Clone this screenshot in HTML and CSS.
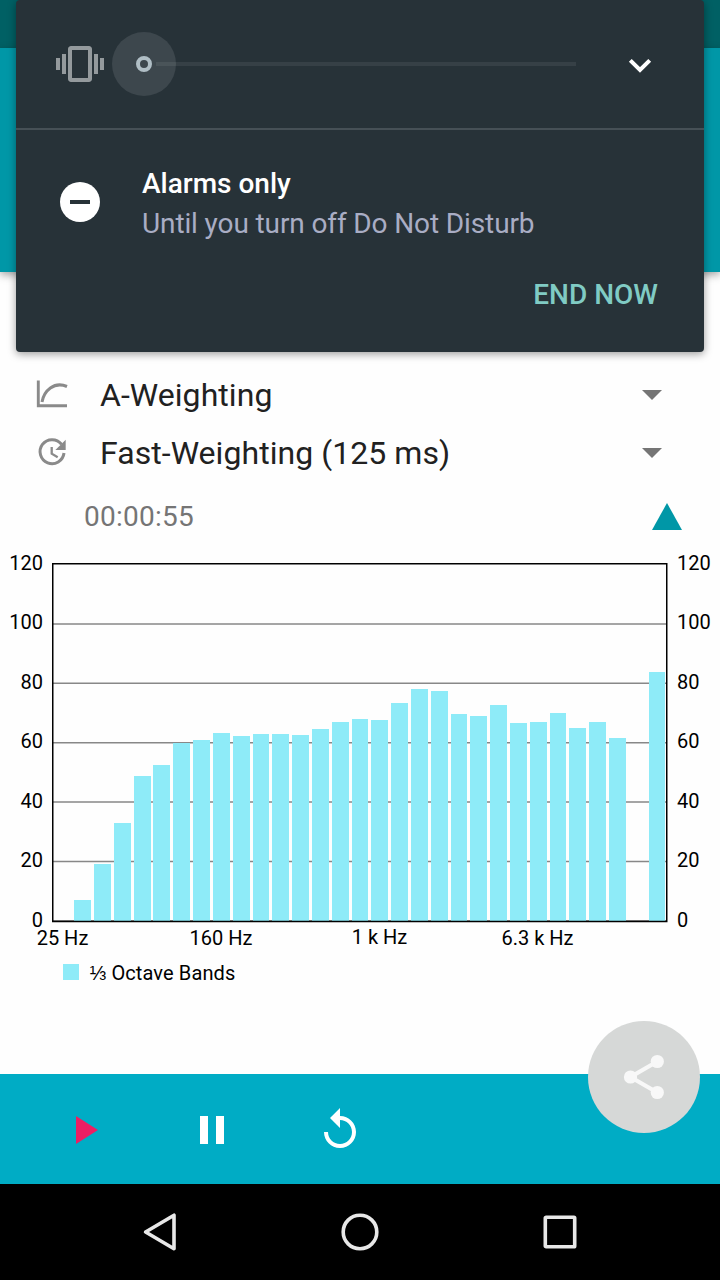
FILE: index.html
```html
<!DOCTYPE html>
<html lang="en">
    <head>
        <meta charset="UTF-8" />
        <meta name="viewport" content="width=device-width, initial-scale=1.0" />
        <title>Sound Meter</title>
        <link rel="stylesheet" href="styles.css">
    </head>
    <body>
        <div class="status-bar"></div>
        <header class="app-bar"></header>

        <main class="content">
            <div class="select-row">
                <svg class="row-icon" width="32" height="32" viewBox="0 0 32 32">
                    <path d="M2.300 1.500v25.200h28.700" fill="none" stroke="#8a8a8a" stroke-width="2.900" />
                    <path d="M6 23C8 12 18 2 31 7.500" fill="none" stroke="#8a8a8a" stroke-width="3" />
                </svg>
                <span class="select-label">A-Weighting</span>
                <span class="caret"></span>
            </div>
            <div class="select-row">
                <svg class="row-icon" width="32" height="32" viewBox="0 0 32 32">
                    <path d="M25.500 7.200A12 12 0 1 0 28 16" fill="none" stroke="#8a8a8a" stroke-width="3" />
                    <path d="M29.700 2.700v10.300H19.400z" fill="#8a8a8a" />
                    <path d="M15.700 10v6.700l6 3.600" fill="none" stroke="#8a8a8a" stroke-width="2.300" />
                </svg>
                <span class="select-label">Fast-Weighting (125 ms)</span>
                <span class="caret"></span>
            </div>
            <div class="time-row">
                <span class="timer">00:00:55</span>
                <span class="collapse"></span>
            </div>

            <svg class="chart" width="720" height="460" viewBox="0 540 720 460">
                <g class="grid">
                    <path d="M53 624H667M53 683.300H667M53 742.800H667M53 802.100H667M53 861.600H667M53 920.700H667" />
                </g>
                <g id="bars" class="bars"></g>
                <path class="frame" d="M52.750 563.750H666.750V921.500H52.750z" />
                <g class="labels left">
                    <text x="43" y="570">120</text>
                    <text x="43" y="629">100</text>
                    <text x="43" y="689">80</text>
                    <text x="43" y="748">60</text>
                    <text x="43" y="808">40</text>
                    <text x="43" y="867">20</text>
                    <text x="43" y="927">0</text>
                </g>
                <g class="labels">
                    <text x="677" y="570">120</text>
                    <text x="677" y="629">100</text>
                    <text x="677" y="689">80</text>
                    <text x="677" y="748">60</text>
                    <text x="677" y="808">40</text>
                    <text x="677" y="867">20</text>
                    <text x="677" y="927">0</text>
                </g>
                <g class="labels bottom">
                    <text x="62.500" y="945">25 Hz</text>
                    <text x="221" y="945">160 Hz</text>
                    <text x="379.500" y="944">1 k Hz</text>
                    <text x="537.500" y="945">6.3 k Hz</text>
                </g>
                <rect class="legend-box" x="63" y="964" width="16" height="16" />
                <text class="legend" x="89.500" y="980">⅓ Octave Bands</text>
            </svg>
        </main>

        <footer class="controls">
            <svg width="48" height="48" viewBox="0 0 24 24"><path d="M8 5v14l11-7z" fill="#ed1e63" /></svg>
            <svg width="48" height="48" viewBox="0 0 24 24"><path d="M6 19h4V5H6v14zm8-14v14h4V5h-4z" fill="#fff" /></svg>
            <svg width="48" height="48" viewBox="0 0 24 24"><path d="M12 5V1L7 6l5 5V7c3.310 0 6 2.690 6 6s-2.690 6-6 6-6-2.690-6-6H4c0 4.420 3.580 8 8 8s8-3.580 8-8-3.580-8-8-8z" fill="#fff" /></svg>
            <div class="fab">
                <svg width="48" height="48" viewBox="0 0 48 48" fill="#f8f8f8">
                    <path d="M37.300 8.500 10.500 24l26.800 15.500" fill="none" stroke="#f8f8f8" stroke-width="4.200" />
                    <circle cx="10.500" cy="24" r="6.600" />
                    <circle cx="37.300" cy="8.500" r="6.600" />
                    <circle cx="37.300" cy="39.500" r="6.600" />
                </svg>
            </div>
        </footer>

        <nav class="nav-bar">
            <svg width="40" height="40" viewBox="0 0 40 40"><path d="M5.600 20 34 3.200v33.600z" /></svg>
            <svg width="40" height="40" viewBox="0 0 40 40"><circle cx="20" cy="20" r="16.800" /></svg>
            <svg width="40" height="40" viewBox="0 0 40 40"><rect x="5.300" y="5.300" width="29.400" height="29.400" rx="0.800" /></svg>
        </nav>

        <div class="volume-panel">
            <div class="slider-row">
                <svg class="vibrate" width="48" height="48" viewBox="0 0 24 24"><path d="M0 15h2V9H0v6zm3 2h2V7H3v10zm19-8v6h2V9h-2zm-3 8h2V7h-2v10zM16.500 3h-9C6.670 3 6 3.670 6 4.500v15c0 .83.67 1.500 1.500 1.500h9c.83 0 1.500-.67 1.500-1.500v-15c0-.83-.67-1.500-1.500-1.500zM16 19H8V5h8v14z" fill="#949a9d" /></svg>
                <div class="thumb"><span></span></div>
                <div class="track"></div>
                <svg class="expand" width="48" height="48" viewBox="0 0 48 48"><path d="M14.300 20.300 24 30 33.700 20.300" fill="none" stroke="#fff" stroke-width="4" /></svg>
            </div>
            <div class="dnd">
                <div class="dnd-icon"></div>
                <div class="dnd-text">
                    <div class="dnd-title">Alarms only</div>
                    <div class="dnd-summary">Until you turn off Do Not Disturb</div>
                </div>
            </div>
            <div class="end-now">END NOW</div>
        </div>

        <script>
            // [left, right, top] of each octave band, the last one is the total level
            const bands = [
                [74, 91, 900], [94, 111, 864], [114, 131, 823], [134, 151, 776],
                [153, 170, 765], [173, 190, 743], [193, 210, 740], [213, 230, 733],
                [233, 250, 736], [253, 269, 734], [272, 289, 734], [292, 309, 735],
                [312, 329, 729], [332, 349, 722], [352, 368, 719], [371, 388, 720],
                [391, 408, 703], [411, 428, 689], [431, 448, 691], [451, 467, 714],
                [470, 487, 716], [490, 507, 705], [510, 527, 723], [530, 547, 722],
                [550, 566, 713], [569, 586, 728], [589, 606, 722], [609, 626, 738],
                [649, 665, 672]
            ];
            const bars = document.getElementById("bars");
            bands.forEach(([left, right, top]) => {
                const bar = document.createElementNS("http://www.w3.org/2000/svg", "rect");
                bar.setAttribute("x", left);
                bar.setAttribute("y", top);
                bar.setAttribute("width", right - left);
                bar.setAttribute("height", 921 - top);
                bars.appendChild(bar);
            });
        </script>
    </body>
</html>
```
FILE: styles.css
```css
body,
html {
    margin: 0;
    padding: 0;
    height: 100%;
    overflow: hidden;
}

body {
    display: flex;
    flex-direction: column;
    position: relative;
    width: 720px;
    height: 1280px;
    background: #fefefe;
    font-family: Roboto, sans-serif;
}

svg {
    display: block;
    flex: none;
}

.status-bar {
    height: 48px;
    background: #006064;
}

.app-bar {
    height: 224px;
    background: #0097a7;
    box-shadow: 0 3px 8px rgba(0, 0, 0, 0.35);
}

.content {
    flex: 1;
    display: flex;
    flex-direction: column;
    padding-top: 94px;
}

.select-row {
    display: flex;
    align-items: center;
    height: 58px;
    padding: 0 58px 0 36px;
}

.select-label {
    flex: 1;
    margin-left: 32px;
    font-size: 32px;
    line-height: 58px;
    letter-spacing: 0.05px;
    color: #212121;
}

.caret {
    border: 10px solid transparent;
    border-top-color: #757575;
    border-bottom: 0;
}

.time-row {
    display: flex;
    align-items: center;
    justify-content: space-between;
    height: 58px;
    padding: 10px 38px 0 84px;
    box-sizing: border-box;
}

.timer {
    font-size: 28px;
    letter-spacing: 0.25px;
    color: #757575;
}

.collapse {
    border: 15.5px solid transparent;
    border-top: 0;
    border-bottom: 27px solid #0097a7;
}

.chart {
    font-size: 20px;
}

.grid path {
    stroke: #888;
    stroke-width: 1.5;
}

.bars rect,
.legend-box {
    fill: #8eebf8;
}

.frame {
    fill: none;
    stroke: #000;
    stroke-width: 1.5;
}

.left {
    text-anchor: end;
}

.bottom {
    text-anchor: middle;
}

.legend {
    letter-spacing: 0.12px;
}

.controls {
    display: flex;
    align-items: center;
    gap: 80px;
    position: relative;
    height: 110px;
    padding: 1px 0 0 60px;
    box-sizing: border-box;
    background: #00acc5;
}

.fab {
    position: absolute;
    top: -53px;
    right: 20px;
    display: flex;
    align-items: center;
    justify-content: center;
    width: 112px;
    height: 112px;
    border-radius: 50%;
    background: #d6d8d7;
}

.nav-bar {
    display: flex;
    align-items: center;
    justify-content: center;
    gap: 160px;
    height: 96px;
    background: #000;
}

.nav-bar svg {
    fill: none;
    stroke: #e8e8e8;
    stroke-width: 3.6;
    stroke-linejoin: round;
}

.volume-panel {
    position: absolute;
    top: 0;
    left: 16px;
    width: 688px;
    height: 352px;
    border-radius: 4px;
    background: #273238;
    box-shadow: 0 2px 8px rgba(0, 0, 0, 0.4);
}

.slider-row {
    display: flex;
    align-items: center;
    height: 128px;
    padding: 0 40px;
    border-bottom: 2px solid #465056;
}

.thumb {
    display: flex;
    align-items: center;
    justify-content: center;
    width: 64px;
    height: 64px;
    margin-left: 8px;
    border-radius: 50%;
    background: #3d474d;
}

.thumb span {
    width: 8px;
    height: 8px;
    border: 4px solid #b0bec5;
    border-radius: 50%;
}

.track {
    width: 420px;
    height: 4px;
    margin-left: -20px;
    background: rgba(255, 255, 255, 0.07);
}

.expand {
    margin-left: 40px;
}

.dnd {
    display: flex;
    padding: 34px 44px 0;
}

.dnd-icon {
    display: flex;
    align-items: center;
    justify-content: center;
    width: 40px;
    height: 40px;
    margin-top: 18px;
    border-radius: 50%;
    background: #fff;
}

.dnd-icon::before {
    content: "";
    width: 20px;
    height: 4px;
    background: #273238;
}

.dnd-text {
    margin-left: 42px;
    font-size: 28px;
    line-height: 40px;
}

.dnd-title {
    font-weight: 500;
    color: #fff;
}

.dnd-summary {
    letter-spacing: -0.12px;
    color: #a9adc4;
}

.end-now {
    padding: 31px 46px 0 0;
    font-size: 28px;
    font-weight: 500;
    line-height: 40px;
    text-align: right;
    color: #80cbc4;
}
```
